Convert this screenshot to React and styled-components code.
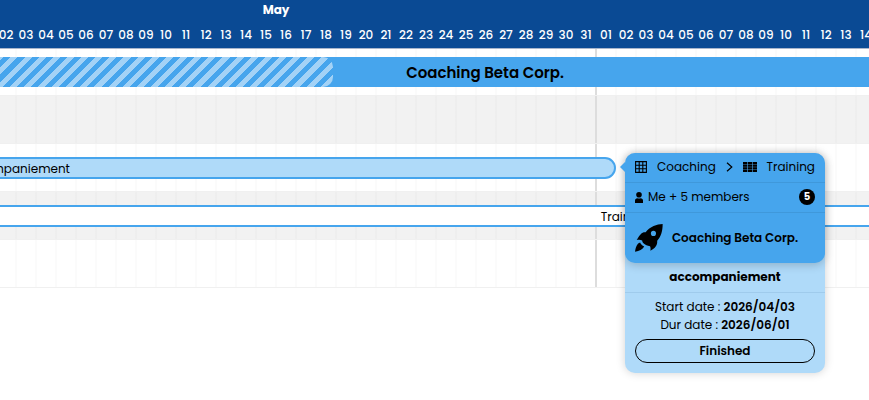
import React from 'react'
import styled, { createGlobalStyle } from 'styled-components'

const months = [
  { name: 'May', days: 31 },
  { name: 'June', days: 30 },
  { name: 'July', days: 31 },
]

const project = {
  name: 'Coaching Beta Corp.',
  progress: 35,
}

const task = {
  title: 'accompaniement',
  start: '2026/04/03',
  end: '2026/06/01',
  members: 5,
}

const pad = (n) => String(n).padStart(2, '0')

const GridIcon = () => (
  <svg width="12" height="12" viewBox="0 0 12 12" fill="none" stroke="#000" strokeWidth="1.1" aria-hidden="true">
    <path d="M.6 .6h10.8v10.8H.6zM4.2 .5v11M7.8 .5v11M.5 4.2h11M.5 7.8h11" />
  </svg>
)

const TableIcon = () => (
  <svg width="14" height="10" viewBox="0 0 14 10" aria-hidden="true">
    <path d="M0 0h4.3v10H0zM4.9 0h4.2v10H4.9zM9.7 0H14v10H9.7z" fill="#000" />
    <path d="M0 2.500h14M0 5h14M0 7.500h14" stroke="#46a5ed" strokeWidth=".4" />
  </svg>
)

const PersonIcon = () => (
  <svg width="8" height="11" viewBox="0 0 8 11" aria-hidden="true">
    <circle cx="4" cy="2.8" r="2.8" />
    <path d="M0 11V8.4C0 7 1.2 6.4 2.2 6.2c1.2 .5 2.4 .5 3.6 0C6.8 6.4 8 7 8 8.4V11z" />
  </svg>
)

const ChevronIcon = () => (
  <svg width="7" height="10" viewBox="0 0 7 10" fill="none" stroke="#000" strokeWidth="1.2" aria-hidden="true">
    <path d="M1 .7 5.8 5 1 9.3" />
  </svg>
)

const RocketIcon = () => (
  <svg width="28" height="28" viewBox="0 1 82 82" aria-hidden="true">
    <path
      fillRule="evenodd"
      d="M81 1C64 2 44 8 31 25 20 24 15 31 5 48c6-1 11-1 16 1 0 6 7 14 23 17 2 4 2 8 1 13 14-7 21-15 20-29C77 37 81 20 81 1zM54 21a7.500 7.500 0 1 1 0 15 7.500 7.500 0 1 1 0-15z"
    />
    <path d="M15 55C6 58 3 66 0 82c13-2 22-6 27-15-6-3-10-7-12-12z" />
  </svg>
)

const TaskPopover = () => (
  <Popover>
    <PopoverHead>
      <Breadcrumb aria-label="Boards">
        <Crumb href="#coaching"><GridIcon />Coaching</Crumb>
        <ChevronIcon />
        <Crumb href="#training"><TableIcon />Training</Crumb>
      </Breadcrumb>
      <Members>
        <PersonIcon />
        <span>Me + {task.members} members</span>
        <Count>{task.members}</Count>
      </Members>
      <ProjectRow>
        <RocketIcon />
        <ProjectName>{project.name}</ProjectName>
      </ProjectRow>
    </PopoverHead>
    <TaskTitle>{task.title}</TaskTitle>
    <Details>
      <DateLine>Start date : <b>{task.start}</b></DateLine>
      <DateLine>Dur date : <b>{task.end}</b></DateLine>
      <StatusButton type="button">Finished</StatusButton>
    </Details>
  </Popover>
)

const App = () => {
  return (
    <>
      <GlobalStyle />
      <Gantt>
        <Header>
          <Months>
            {months.map((month) => (
              <Month key={month.name} $days={month.days}>
                <MonthName>{month.name}</MonthName>
                <Days>
                  {Array.from({ length: month.days }, (_, i) => (
                    <Day key={i}>{pad(i + 1)}</Day>
                  ))}
                </Days>
              </Month>
            ))}
          </Months>
        </Header>
        <Rows>
          <Row>
            <ProjectBar $span={51}>
              <Progress style={{ width: `${project.progress}%` }} />
              {project.name}
            </ProjectBar>
          </Row>
          <Row $shaded />
          <Row>
            <TaskBar $span={32} $filled>
              <StartLabel>{task.title}</StartLabel>
              <TaskPopover />
            </TaskBar>
          </Row>
          <Row $shaded>
            <TaskBar $span={65}>Training</TaskBar>
          </Row>
          <Row />
        </Rows>
      </Gantt>
    </>
  )
}

const GlobalStyle = createGlobalStyle`
  * {
    box-sizing: border-box;
  }
  body {
    margin: 0;
    background: #fff;
    color: #000;
    font-family: Poppins, Inter, "Open Sans", sans-serif;
    font-size: 12px;
    line-height: 18px;
  }
`

const Gantt = styled.div`
  min-height: 100vh;
  overflow: hidden;
`

const Header = styled.header`
  position: relative;
  z-index: 1;
  background: #0a4a94;
  box-shadow: 0 1px 0 #a9b6cc;
  color: #fff;
`

const Months = styled.div`
  display: flex;
  margin-left: -24px;
`

const Month = styled.div`
  flex: none;
  width: ${(props) => props.$days * 20}px;
`

const MonthName = styled.div`
  padding-right: 20px;
  line-height: 20px;
  font-weight: 700;
  text-align: center;
`

const Days = styled.div`
  display: flex;
  padding-top: 2px;
  line-height: 26px;
  font-weight: 500;
`

const Day = styled.div`
  width: 20px;
  text-align: center;
`

const Rows = styled.main`
  margin-left: -24px;
`

const Row = styled.div`
  display: grid;
  grid-auto-columns: 20px;
  grid-template-rows: 100%;
  align-items: center;
  height: 48px;
  border-bottom: 1px solid #f0f0f0;
  background-color: ${(props) => (props.$shaded ? '#f2f2f2' : '#fff')};
  background-image:
    linear-gradient(90deg, transparent 619px, #dddddd 619px, #dddddd 621px, transparent 621px),
    repeating-linear-gradient(90deg, rgba(0, 0, 0, 0.016) 0 1px, transparent 1px 19px, rgba(0, 0, 0, 0.016) 19px 20px);
`

const Bar = styled.div`
  position: relative;
  grid-column: 1 / span ${(props) => props.$span};
  display: flex;
  align-items: center;
  justify-content: center;
  padding: 2px 2px 0 0;
`

const ProjectBar = styled(Bar)`
  height: 30px;
  background: #46a5ed;
  font-size: 15px;
  font-weight: 600;
`

const Progress = styled.div`
  position: absolute;
  inset: 0 auto 0 0;
  border-radius: 0 10px 10px 0;
  background: repeating-linear-gradient(
    -45deg,
    transparent 0 4px,
    rgba(255, 255, 255, 0.5) 4px 9px,
    transparent 9px 10px
  );
`

const TaskBar = styled(Bar)`
  height: 22px;
  border: 2px solid #46a5ed;
  border-radius: 11px;
  background: ${(props) => (props.$filled ? '#afdaf9' : '#fff')};
  justify-content: ${(props) => (props.$filled ? 'flex-start' : 'center')};
`

const StartLabel = styled.span`
  display: flex;
  justify-content: flex-end;
  width: 92px;
`

const Popover = styled.section`
  position: absolute;
  z-index: 2;
  top: -6px;
  left: calc(100% + 11px);
  width: 200px;
  border-radius: 10px;
  background: #afdaf9;
  box-shadow: 0 0 10px rgba(0, 0, 0, 0.18);

  &::before {
    content: '';
    position: absolute;
    top: 9px;
    left: -5px;
    border: 5px solid transparent;
    border-left: 0;
    border-right-color: #46a5ed;
  }
`

const PopoverHead = styled.div`
  border-radius: 10px;
  background: #46a5ed;
  box-shadow: 0 2px 10px rgba(0, 0, 0, 0.2);
`

const Breadcrumb = styled.nav`
  display: flex;
  align-items: center;
  justify-content: space-between;
  height: 30px;
  padding: 0 10px;
  border-bottom: 1px solid #3f98db;
`

const Crumb = styled.a`
  display: flex;
  align-items: center;
  gap: 10px;
  color: inherit;
  text-decoration: none;
`

const Members = styled.div`
  display: flex;
  align-items: center;
  gap: 5px;
  height: 30px;
  padding: 0 10px;
  border-bottom: 1px solid #3f98db;
`

const Count = styled.span`
  width: 16px;
  margin-left: auto;
  border-radius: 50%;
  background: #000;
  color: #fff;
  font-size: 10px;
  font-weight: 700;
  line-height: 16px;
  text-align: center;
`

const ProjectRow = styled.div`
  display: flex;
  align-items: center;
  height: 50px;
  padding: 0 10px;
`

const ProjectName = styled.strong`
  flex: 1;
  padding-right: 8px;
  text-align: center;
  font-weight: 600;
`

const TaskTitle = styled.h2`
  margin: 0;
  padding: 5px 10px 6px;
  border-bottom: 1px solid #9fcbec;
  font-size: 12px;
  font-weight: 700;
  text-align: center;
`

const Details = styled.div`
  padding: 5px 10px 10px;
  text-align: center;
`

const DateLine = styled.p`
  margin: 0;
  line-height: 18px;

  b {
    font-weight: 600;
  }
`

const StatusButton = styled.button`
  display: block;
  width: 100%;
  height: 24px;
  margin-top: 5px;
  padding: 0;
  border: 1px solid #000;
  border-radius: 12px;
  background: transparent;
  color: #000;
  font: inherit;
  font-weight: 600;
`

export default App
